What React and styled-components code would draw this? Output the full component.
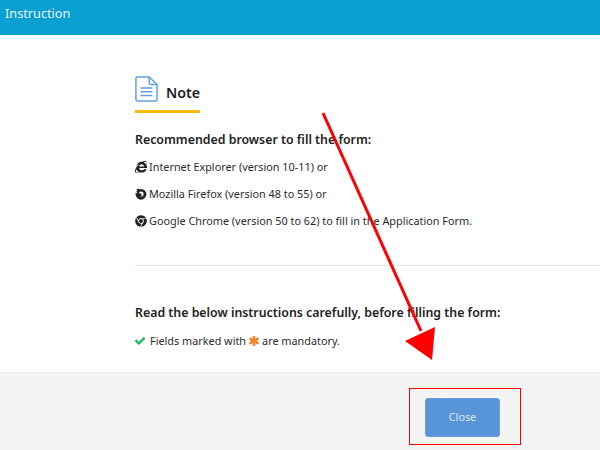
import React from "react";
import styled, { createGlobalStyle } from "styled-components";
import { FaInternetExplorer, FaChrome, FaCheck, FaAsterisk } from "react-icons/fa";

const GlobalStyle = createGlobalStyle`
  html, body {
    margin: 0;
    padding: 0;
    overflow: hidden;
    background: #fff;
  }
  * {
    box-sizing: border-box;
  }
`;

const Page = styled.div`
  position: relative;
  display: flex;
  flex-direction: column;
  width: 600px;
  height: 450px;
  overflow: hidden;
  font-family: "Noto Sans", sans-serif;
  color: #222;
`;

const Header = styled.div`
  height: 35px;
  flex: none;
  padding: 4px 0 0 5px;
  background: #0a9fd1;
  color: #e4f4fa;
  font-size: 12.7px;
  line-height: 19px;
  box-shadow: 0 1px 3px rgba(60, 120, 220, 0.12);
`;

const Body = styled.div`
  flex: 1;
  padding: 40px 0 0 135px;
  background: #fff;
`;

const NoteTitle = styled.div`
  display: flex;
  align-items: flex-start;
  gap: 8px;
  width: 65px;
  height: 38px;
  border-bottom: 3px solid #fdb90b;
  font-size: 14.2px;
  font-weight: 600;
  line-height: 20px;
  color: #1c1c1c;
  white-space: nowrap;
`;

const NoteLabel = styled.span`
  margin-top: 8px;
`;

const Heading = styled.div`
  margin-top: ${(p) => p.$top}px;
  font-size: 12.35px;
  font-weight: 600;
  line-height: 18px;
  color: #222;
  white-space: nowrap;
`;

const Line = styled.div`
  display: flex;
  align-items: center;
  margin-top: ${(p) => p.$top}px;
  font-size: 10.85px;
  line-height: 16px;
  color: #2c2c2c;
  white-space: nowrap;
`;

const BrowserIcon = styled.span`
  display: inline-flex;
  width: 14px;
  font-size: 12px;
  color: #222;
`;

const Check = styled(FaCheck)`
  margin-right: 5px;
  width: 10px;
  height: 10px;
  color: #1fb85c;
  stroke: currentColor;
  stroke-width: 30;
`;

const Star = styled(FaAsterisk)`
  margin: 0 3px;
  width: 10px;
  height: 10px;
  color: #f58126;
  stroke: currentColor;
  stroke-width: 50;
`;

const Divider = styled.div`
  height: 1px;
  margin-top: 36px;
  background: #e3e3e3;
`;

const Footer = styled.div`
  display: flex;
  justify-content: flex-end;
  height: 78px;
  flex: none;
  padding: 25px 100px 0 0;
  background: #f4f4f4;
  border-top: 1px solid #eee;
`;

const CloseButton = styled.button`
  width: 75px;
  height: 39px;
  padding: 0 0 2px;
  border: 1px solid #6f9fd8;
  border-radius: 3px;
  background: #5894d8;
  color: #dfe9f6;
  font-family: "Noto Sans", sans-serif;
  font-size: 10.8px;
`;

const Highlight = styled.div`
  position: absolute;
  left: 409px;
  top: 388px;
  width: 112px;
  height: 57px;
  border: 1px solid #f00;
`;

const ArrowLayer = styled.svg`
  position: absolute;
  left: 0;
  top: 0;
  pointer-events: none;
`;

const DocIcon = () => (
  <svg width="25" height="28" viewBox="0 0 25 28" fill="none" stroke="#5f9fe0" strokeWidth="1.6">
    <path d="M15.5 1H2.5a1.5 1.5 0 0 0-1.5 1.5v23a1.5 1.5 0 0 0 1.5 1.5h20a1.5 1.5 0 0 0 1.5-1.5V9z" strokeLinejoin="round" />
    <path d="M15.5 1v6.5a1.5 1.5 0 0 0 1.5 1.5h7" />
    <path d="M6 13h13M6 17h13M6 21h13" />
  </svg>
);

// old style firefox mark, a dark swirl round a white centre
const FirefoxIcon = () => (
  <svg width="12" height="12" viewBox="0 0 12 12">
    <circle cx="6" cy="6.3" r="5.4" fill="#222" />
    <path d="M4 0.4C3.6 2 4.6 2.6 5.6 2.9L3 3.4 1.2 1.8z" fill="#222" />
    <path d="M5.4 3.5C7.4 3.2 8.8 4.6 8.6 6.4 8.4 8 6.8 8.9 5.4 8.4 6.6 8.1 7 7 6.6 6.2 6 5.2 4.6 5.2 4 5.6 4 4.7 4.5 3.9 5.4 3.5z" fill="#fff" />
    <path d="M0.8 4.6L2 3.6 2.2 5.4z" fill="#fff" />
  </svg>
);

const App = () => {
  return (
    <Page>
      <GlobalStyle />
      <Header>Instruction</Header>
      <Body>
        <NoteTitle>
          <DocIcon />
          <NoteLabel>Note</NoteLabel>
        </NoteTitle>
        <Heading $top={18}>Recommended browser to fill the form:</Heading>
        <Line $top={10}>
          <BrowserIcon><FaInternetExplorer /></BrowserIcon>
          Internet Explorer (version 10-11) or
        </Line>
        <Line $top={11}>
          <BrowserIcon><FirefoxIcon /></BrowserIcon>
          Mozilla Firefox (version 48 to 55) or
        </Line>
        <Line $top={11}>
          <BrowserIcon><FaChrome /></BrowserIcon>
          Google Chrome (version 50 to 62) to fill in the Application Form.
        </Line>
        <Divider />
        <Heading $top={38}>Read the below instructions carefully, before filling the form:</Heading>
        <Line $top={11}>
          <Check />
          Fields marked with
          <Star />
          are mandatory.
        </Line>
      </Body>
      <Footer>
        <CloseButton>Close</CloseButton>
      </Footer>
      <Highlight />
      <ArrowLayer width="600" height="450" viewBox="0 0 600 450">
        <path d="M323 113L421 331" stroke="#f00" strokeWidth="3" fill="none" />
        <path d="M405 341L435 327L432 360z" fill="#f00" />
      </ArrowLayer>
    </Page>
  );
};

export default App;
